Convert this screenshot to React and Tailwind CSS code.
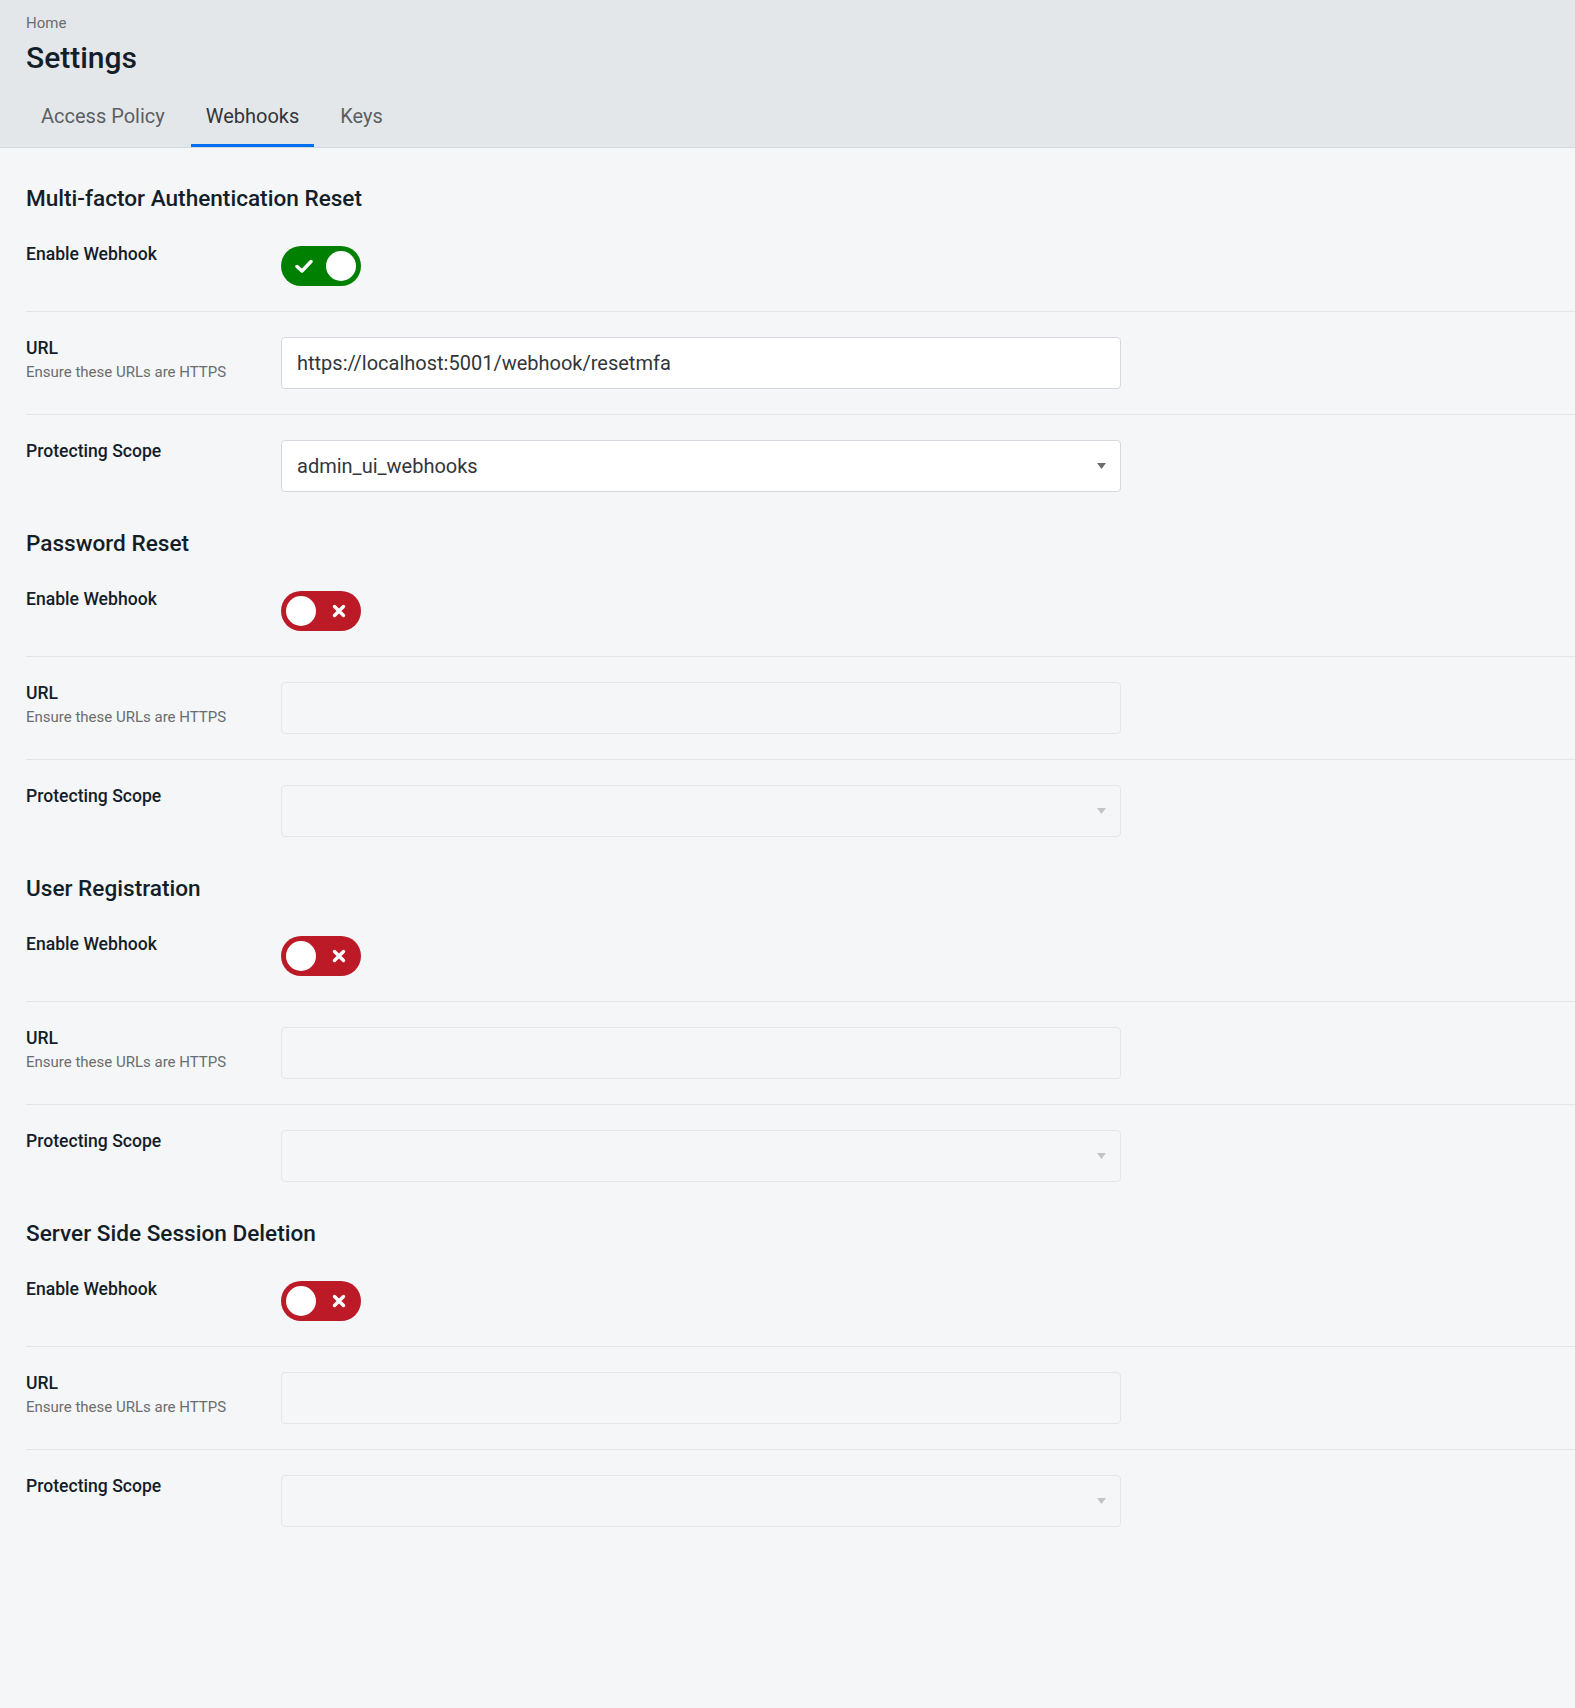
import React from "react";

const sections = [
  { title: "Multi-factor Authentication Reset", enabled: true, url: "https://localhost:5001/webhook/resetmfa", scope: "admin_ui_webhooks" },
  { title: "Password Reset", enabled: false, url: "", scope: "" },
  { title: "User Registration", enabled: false, url: "", scope: "" },
  { title: "Server Side Session Deletion", enabled: false, url: "", scope: "" },
];

const Toggle = ({ on }) =>
  on ? (
    <div className="w-[80px] h-[40px] rounded-full bg-[#008000] flex items-center justify-between pl-[14px] pr-[5px]">
      <svg width="18" height="14" viewBox="0 0 18 14">
        <path d="M2 7.5 L7 12 L16 2.5" fill="none" stroke="white" strokeWidth="3.4" strokeLinecap="round" strokeLinejoin="round" />
      </svg>
      <div className="w-[30px] h-[30px] rounded-full bg-white" />
    </div>
  ) : (
    <div className="w-[80px] h-[40px] rounded-full bg-[#bb1a26] flex items-center justify-between pl-[5px] pr-[15px]">
      <div className="w-[30px] h-[30px] rounded-full bg-white" />
      <svg width="14" height="14" viewBox="0 0 14 14">
        <path d="M2.5 2.5 L11.5 11.5 M11.5 2.5 L2.5 11.5" fill="none" stroke="white" strokeWidth="3.4" strokeLinecap="round" />
      </svg>
    </div>
  );

const Arrow = ({ disabled }) => (
  <svg width="9" height="6" viewBox="0 0 9 6">
    <path d="M0 0 H9 L4.5 6 Z" fill={disabled ? "#c2c4c6" : "#6a6d70"} />
  </svg>
);

const Section = ({ s }) => {
  const disabled = !s.enabled;
  return (
    <div className="pt-[14px]">
      <h2 className="text-[22.6px] leading-[26px] font-medium text-[#131e29] mb-[7px]">{s.title}</h2>

      {/* enable */}
      <div className="flex items-start py-[25px] border-b border-[#e5e5e5]">
        <div className="w-[255px] shrink-0 text-[17.6px] leading-[20px] font-medium text-[#131e29]">Enable Webhook</div>
        <div className="mt-[2px]">
          <Toggle on={s.enabled} />
        </div>
      </div>

      {/* url */}
      <div className="flex items-start py-[25px] border-b border-[#e5e5e5]">
        <div className="w-[255px] shrink-0 pt-[1px]">
          <div className="text-[17.6px] leading-[20px] font-medium text-[#131e29]">URL</div>
          <div className="text-[15px] leading-[20px] mt-[4px] text-[#6a6d70]">Ensure these URLs are HTTPS</div>
        </div>
        <div
          className={`w-[840px] h-[52px] rounded-[4px] border flex items-center px-[15px] text-[20px] text-[#32363a] ${
            disabled ? "bg-[#f5f6f7] border-[#e5e6e8]" : "bg-white border-[#d5d8dc]"
          }`}
        >
          {s.url}
        </div>
      </div>

      {/* scope */}
      <div className="flex items-start py-[25px]">
        <div className="w-[255px] shrink-0 pt-[1px] text-[17.6px] leading-[20px] font-medium text-[#131e29]">Protecting Scope</div>
        <div
          className={`w-[840px] h-[52px] rounded-[4px] border flex items-center justify-between pl-[15px] pr-[14px] text-[20px] text-[#32363a] ${
            disabled ? "bg-[#f5f6f7] border-[#e5e6e8]" : "bg-white border-[#d5d8dc]"
          }`}
        >
          <span>{s.scope}</span>
          <Arrow disabled={disabled} />
        </div>
      </div>
    </div>
  );
};

export default function App() {
  return (
    <div className="min-h-screen bg-[#f5f6f7] font-['Roboto',sans-serif]">
      {/* header */}
      <div className="bg-[#e4e7ea] border-b border-[#d5d9dd] pl-[26px]">
        <div className="pt-[14px] text-[15px] leading-[18px] text-[#6a6d70]">Home</div>
        <h1 className="mt-[8px] text-[30px] leading-[36px] font-medium text-[#131e29]">Settings</h1>
        <div className="flex gap-[11px] mt-[28px]">
          {["Access Policy", "Webhooks", "Keys"].map((t) => (
            <div
              key={t}
              className={`px-[15px] pb-[16px] text-[20px] leading-[24px] border-b-[3px] ${
                t === "Webhooks" ? "border-[#0070f2] text-[#32363a]" : "border-transparent text-[#5b5f63]"
              }`}
            >
              {t}
            </div>
          ))}
        </div>
      </div>

      {/* content */}
      <div className="pl-[26px] pt-[24px] pb-[100px]">
        {sections.map((s) => (
          <Section key={s.title} s={s} />
        ))}
      </div>
    </div>
  );
}
